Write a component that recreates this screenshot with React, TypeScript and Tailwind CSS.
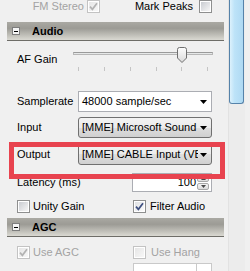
type CheckProps = { checked?: boolean; disabled?: boolean };

function Check({ checked, disabled }: CheckProps) {
  return (
    <span
      className={`relative block w-[13px] h-[13px] shrink-0 border p-[1px] bg-white ${
        disabled ? "border-[#c3c3c3]" : "border-[#8e8f8f]"
      }`}
    >
      <span
        className={`block w-full h-full ${
          disabled
            ? "bg-[linear-gradient(135deg,#e6e6e6,#f7f7f7)]"
            : checked
            ? "bg-[linear-gradient(135deg,#dfe1e4,#fbfbfb)]"
            : "bg-[linear-gradient(135deg,#c9ccd1,#f6f6f6)]"
        }`}
      />
      {checked && (
        <svg className="absolute left-[-1px] top-[-1px]" width="13" height="13" viewBox="0 0 13 13">
          <path
            d="M3 6.6 L5.4 9.3 L10 3.2"
            fill="none"
            stroke={disabled ? "#b2b2b2" : "#3e4f80"}
            strokeWidth="1.7"
          />
        </svg>
      )}
    </span>
  );
}

function Arrow() {
  return (
    <svg width="7" height="4" viewBox="0 0 7 4" className="shrink-0">
      <path d="M0 0 H7 L3.5 4 Z" fill="#000" />
    </svg>
  );
}

function Header({ title }: { title: string }) {
  return (
    <div className="ml-[7px] w-[217px] h-[19px] flex items-center border-b border-[#6e6d68] bg-[linear-gradient(to_bottom,#aaa9a3,#9c9b95_35%,#dad9d2)]">
      <span className="ml-[5px] w-[8px] h-[8px] border border-[#7d7d7d] bg-[#f4f4f4] flex items-center justify-center">
        <span className="block w-[4px] h-[1px] bg-black" />
      </span>
      <span className="ml-[12px] font-bold text-black">{title}</span>
    </div>
  );
}

function Label({ children }: { children: string }) {
  return <div className="pl-[17px] w-[78px] shrink-0">{children}</div>;
}

function DropDown({ text }: { text: string }) {
  return (
    <div className="w-[134px] h-[21px] rounded-[3px] border border-[#707070] bg-[linear-gradient(to_bottom,#f3f3f3,#ebebeb_50%,#dedede_50%,#d0d0d0)] flex items-center pl-[3px] pr-[4px]">
      <div className="w-[116px] overflow-hidden whitespace-nowrap">{text}</div>
      <div className="flex-1 flex justify-end">
        <Arrow />
      </div>
    </div>
  );
}

function Spinner() {
  return (
    <div className="w-[12px] h-full flex flex-col gap-[1px] py-[1px]">
      <div className="flex-1 rounded-[2px] border border-[#a9a9a9] bg-[linear-gradient(to_bottom,#f4f4f4,#dcdcdc)] flex items-center justify-center">
        <svg width="5" height="3" viewBox="0 0 5 3">
          <path d="M0 3 H5 L2.5 0 Z" fill="#4a4a4a" />
        </svg>
      </div>
      <div className="flex-1 rounded-[2px] border border-[#a9a9a9] bg-[linear-gradient(to_bottom,#f4f4f4,#dcdcdc)] flex items-center justify-center">
        <svg width="5" height="3" viewBox="0 0 5 3">
          <path d="M0 0 H5 L2.5 3 Z" fill="#4a4a4a" />
        </svg>
      </div>
    </div>
  );
}

export default function App() {
  const ticks = [5, 31, 57, 83, 108, 134];

  return (
    <div className="relative w-[250px] h-[271px] overflow-hidden flex bg-[#f0f0f0] text-[11px] leading-none text-black font-['Liberation_Sans',Arial,sans-serif]">
      <div className="w-[228px] shrink-0 flex flex-col">
        {/* top checks */}
        <div className="h-[17px] flex items-center">
          <div className="w-[100px] flex items-center justify-end gap-[3px]">
            <span className="text-[#a3a3a3]">FM Stereo</span>
            <Check checked disabled />
          </div>
          <div className="w-[112px] flex items-center justify-end gap-[6px]">
            <span>Mark Peaks</span>
            <Check />
          </div>
        </div>

        {/* Audio */}
        <div className="mt-[9px]">
          <Header title="Audio" />
        </div>

        <div className="h-[36px] flex items-center">
          <div className="pl-[17px] w-[73px] shrink-0">AF Gain</div>
          <div className="relative self-start w-[140px] h-[36px]">
            <div className="mt-[11px] h-[3px] border border-[#b7b7b7] border-t-[#9a9a9a] bg-[#e6e8e8]" />
            <div className="relative h-[5px] mt-[12px]">
              {ticks.map((x) => (
                <span key={x} className="absolute top-0 w-[1px] h-[4px] bg-[#c4c4c4]" style={{ left: x }} />
              ))}
            </div>
            <svg className="absolute left-[104px] top-[6px]" width="10" height="16" viewBox="0 0 10 16">
              <defs>
                <linearGradient id="thumb" x1="0" y1="0" x2="0" y2="1">
                  <stop offset="0" stopColor="#fdfdfd" />
                  <stop offset="1" stopColor="#d9d9d9" />
                </linearGradient>
              </defs>
              <path
                d="M0.5 2.5 Q0.5 0.5 2.5 0.5 H7.5 Q9.5 0.5 9.5 2.5 V11 L5 15.5 L0.5 11 Z"
                fill="url(#thumb)"
                stroke="#6f6f6f"
              />
            </svg>
          </div>
        </div>

        <div className="mt-[14px] h-[21px] flex items-center">
          <Label>Samplerate</Label>
          <div className="w-[134px] h-[21px] border border-[#abadb3] bg-white flex items-center pl-[3px] pr-[4px]">
            <span className="flex-1">48000 sample/sec</span>
            <Arrow />
          </div>
        </div>

        <div className="mt-[5px] h-[21px] flex items-center">
          <Label>Input</Label>
          <DropDown text="[MME] Microsoft Sound" />
        </div>

        <div className="mt-[6px] h-[21px] flex items-center">
          <Label>Output</Label>
          <DropDown text="[MME] CABLE Input (VB-Audio Virtual Cable)" />
        </div>

        <div className="mt-[8px] h-[19px] flex items-center">
          <div className="pl-[17px] w-[132px] shrink-0">Latency (ms)</div>
          <div className="w-[80px] h-[19px] border border-[#abadb3] bg-white flex items-center pr-[2px]">
            <span className="flex-1 text-right pr-[1px]">100</span>
            <Spinner />
          </div>
        </div>

        <div className="mt-[8px] h-[13px] flex items-center">
          <div className="pl-[17px] w-[133px] shrink-0 flex items-center gap-[3px]">
            <Check />
            <span>Unity Gain</span>
          </div>
          <div className="flex items-center gap-[4px]">
            <Check checked />
            <span>Filter Audio</span>
          </div>
        </div>

        {/* AGC */}
        <div className="mt-[5px]">
          <Header title="AGC" />
        </div>

        <div className="mt-[9px] h-[13px] flex items-center text-[#a3a3a3]">
          <div className="pl-[17px] w-[133px] shrink-0 flex items-center gap-[3px]">
            <Check checked disabled />
            <span>Use AGC</span>
          </div>
          <div className="flex items-center gap-[5px]">
            <Check disabled />
            <span>Use Hang</span>
          </div>
        </div>

        <div className="mt-[4px] h-[20px] flex">
          <div className="w-[133px] shrink-0" />
          <div className="w-[79px] h-[20px] border border-[#c9c9c9] bg-white flex justify-end">
            <div className="w-[15px] border-l border-[#c9c9c9]" />
          </div>
        </div>
      </div>

      {/* scrollbar */}
      <div className="w-[17px] shrink-0 h-full border-l border-[#e2e2e2] bg-[#ececec]">
        <div className="w-[15px] h-[104px] rounded-b-[3px] border border-t-0 border-[#5683aa] bg-[linear-gradient(to_right,#dcf1fc,#bde3f8_35%,#aed9f3)]" />
      </div>
      <div className="flex-1 bg-[#f0f0f0]" />

      {/* highlight annotation */}
      <div className="absolute left-[9px] top-[142px] w-[216px] h-[37px] border-[5px] border-[#e8434f]" />
    </div>
  );
}
